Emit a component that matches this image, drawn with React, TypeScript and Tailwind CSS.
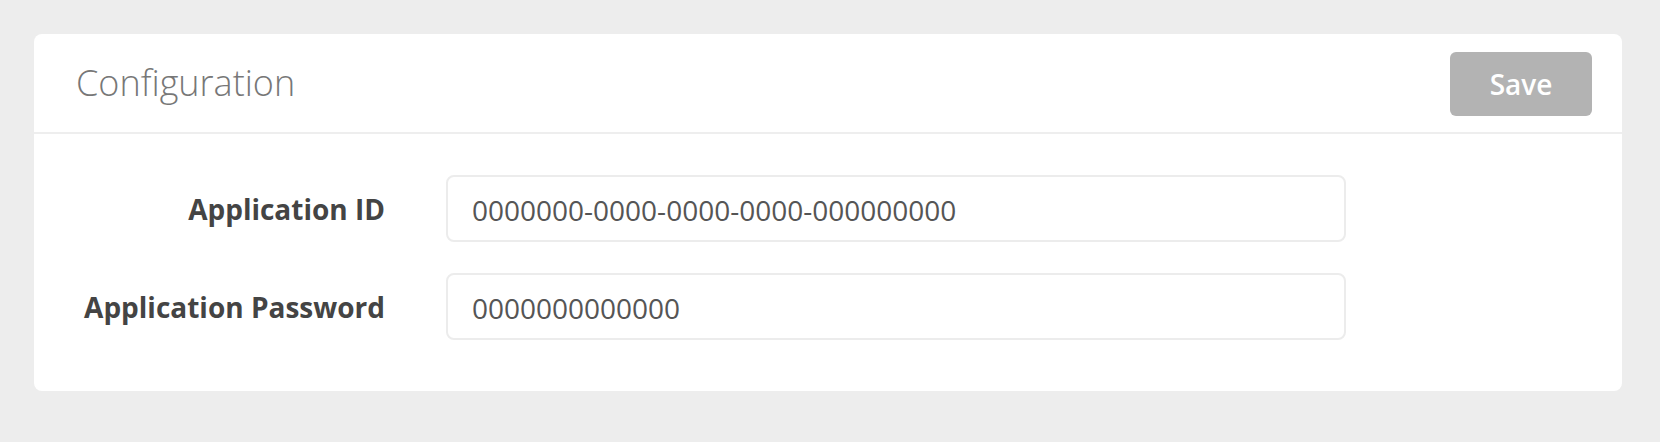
import { useState } from "react";

const FIELDS = [
  { id: "app-id", label: "Application ID", value: "0000000-0000-0000-0000-000000000" },
  { id: "app-password", label: "Application Password", value: "0000000000000" },
];

export default function App() {
  const [values, setValues] = useState<Record<string, string>>(
    Object.fromEntries(FIELDS.map((f) => [f.id, f.value]))
  );

  return (
    <div
      className="min-h-[442px] w-full bg-[#ededed] p-[34px]"
      style={{ fontFamily: '"Open Sans", "Liberation Sans", sans-serif' }}
    >
      <div className="w-[1588px] rounded-[8px] bg-white">
        {/* Header */}
        <div className="flex h-[100px] items-center justify-between border-b-2 border-[#eeeeee] pl-[42px] pr-[30px]">
          <h2 className="text-[36px] font-light text-[#777777]">Configuration</h2>
          <button className="mt-[2px] h-[64px] w-[142px] rounded-[6px] bg-[#b3b3b3] text-[28px] font-semibold text-white">
            Save
          </button>
        </div>

        {/* Form */}
        <div className="flex flex-col gap-[31px] pt-[41px] pb-[51px]">
          {FIELDS.map((f) => (
            <div key={f.id} className="flex items-center">
              <label
                htmlFor={f.id}
                className="w-[351px] text-right text-[28px] font-bold text-[#444444]"
              >
                {f.label}
              </label>
              <input
                id={f.id}
                value={values[f.id]}
                onChange={(e) => setValues({ ...values, [f.id]: e.target.value })}
                className="ml-[61px] h-[67px] w-[900px] rounded-[8px] border-2 border-[#ececec] px-[24px] pt-[2px] text-[28px] text-[#555555] outline-none"
              />
            </div>
          ))}
        </div>
      </div>
    </div>
  );
}
